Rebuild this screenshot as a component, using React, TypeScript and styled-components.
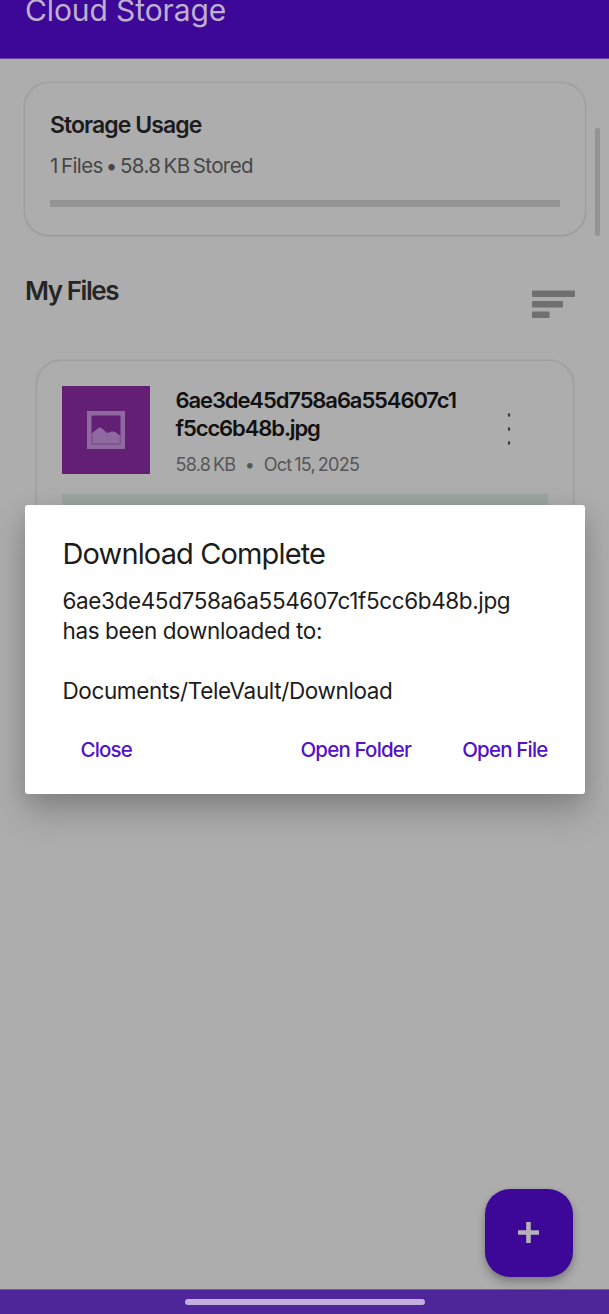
import React from "react";
import styled, { createGlobalStyle } from "styled-components";

const GlobalStyle = createGlobalStyle`
  * { box-sizing: border-box; }
  html, body { margin: 0; padding: 0; background: #adadad; }
  body { font-family: Inter, "Liberation Sans", sans-serif; overflow: hidden; }
  h1, h2, h3, p { margin: 0; }
  button { font: inherit; border: 0; background: none; padding: 0; }
`;

const Screen = styled.div`
  position: relative;
  width: 609px;
  height: 1314px;
  display: flex;
  flex-direction: column;
  overflow: hidden;
  background: #adadad;
`;

const TopBar = styled.header`
  height: 59px;
  flex: none;
  padding-left: 25px;
  background: #3d0897;
  border-bottom: 1px solid #6543a0;
`;

const AppTitle = styled.h1`
  margin-top: -10px;
  font-size: 30px;
  line-height: 40px;
  font-weight: 400;
  letter-spacing: -0.1px;
  color: #bfb0cd;
  white-space: nowrap;
`;

const Content = styled.main`
  flex: 1;
  display: flex;
  flex-direction: column;
  padding: 24px 24px 0 25px;
`;

const Card = styled.section`
  border-radius: 24px;
  background: #adadad;
  box-shadow: 0 0 2px 0.5px rgba(0, 0, 0, 0.1), 0 1px 2px rgba(0, 0, 0, 0.05);
`;

const UsageCard = styled(Card)`
  height: 152px;
  padding: 27px 25px 0;
`;

const UsageTitle = styled.h2`
  font-size: 23px;
  line-height: 30px;
  font-weight: 600;
  letter-spacing: -0.93px;
  color: #1c1c1c;
`;

const UsageText = styled.p`
  margin-top: 12px;
  font-size: 20.5px;
  line-height: 28px;
  letter-spacing: -0.6px;
  word-spacing: -2px;
  color: #474747;
`;

const UsageTrack = styled.div`
  margin-top: 20px;
  height: 7px;
  background: #949494;
`;

const SectionHead = styled.div`
  display: flex;
  justify-content: space-between;
  height: 126px;
  padding: 38px 10px 0 0;
`;

const SectionTitle = styled.h2`
  font-size: 26px;
  line-height: 36px;
  font-weight: 600;
  letter-spacing: -1.45px;
  color: #262626;
`;

const SortIcon = styled.svg`
  width: 43px;
  height: 28px;
  margin-top: 17px;
`;

const FileCard = styled(Card)`
  height: 250px;
  margin: 0 12px;
  padding: 25px 25px 0;
`;

const FileRow = styled.div`
  display: flex;
  height: 88px;
`;

const Thumb = styled.div`
  width: 88px;
  height: 88px;
  display: grid;
  place-items: center;
  background: #631f73;
`;

const FileInfo = styled.div`
  width: 300px;
  margin-left: 25.5px;
`;

const FileName = styled.h3`
  font-size: 22px;
  line-height: 28px;
  font-weight: 600;
  letter-spacing: -1.1px;
  color: #111;
  white-space: nowrap;
`;

const FileMeta = styled.p`
  display: flex;
  gap: 9.5px;
  margin-top: 10px;
  font-size: 18px;
  line-height: 26px;
  letter-spacing: -0.74px;
  word-spacing: -1.5px;
  color: #575757;
`;

const MoreIcon = styled.svg`
  width: 6px;
  height: 36px;
  margin: 25px 0 0 30px;
`;

const StatusBand = styled.div`
  height: 40px;
  margin-top: 20px;
  background: #9ba49f;
`;

const NavBar = styled.footer`
  height: 25px;
  flex: none;
  display: flex;
  justify-content: center;
  padding-top: 9px;
  background: #4f2699;
  border-top: 1px solid #7659a5;
`;

const HomePill = styled.div`
  width: 240px;
  height: 6px;
  border-radius: 3px;
  background: #c3aee0;
`;

const ScrollThumb = styled.div`
  position: absolute;
  top: 128px;
  right: 9px;
  width: 5px;
  height: 108px;
  border-radius: 2px;
  background: #949494;
`;

const AddButton = styled.button`
  position: absolute;
  right: 36.5px;
  bottom: 37px;
  width: 88px;
  height: 88px;
  display: grid;
  place-items: center;
  border-radius: 25px;
  background: #3d0897;
  box-shadow: 0 6px 10px rgba(0, 0, 0, 0.22), 0 1px 5px rgba(0, 0, 0, 0.12);
`;

const PlusIcon = styled.svg`
  width: 21px;
  height: 21px;
  margin-bottom: 1px;
`;

const Dialog = styled.div`
  position: absolute;
  top: 505px;
  left: 25px;
  width: 560px;
  height: 289px;
  padding: 29px 37.5px 0 37.5px;
  border-radius: 3px;
  background: #fff;
  box-shadow: 0 18px 36px rgba(0, 0, 0, 0.2), 0 6px 20px rgba(0, 0, 0, 0.1);
  color: #1c1c1c;
`;

const DialogTitle = styled.h2`
  font-size: 29px;
  line-height: 40px;
  font-weight: 400;
  letter-spacing: -0.87px;
`;

const DialogText = styled.p<{ $gap?: number }>`
  margin-top: ${(p) => p.$gap ?? 0}px;
  font-size: 22.5px;
  line-height: 30px;
  letter-spacing: -0.38px;
  white-space: nowrap;
`;

const Actions = styled.div`
  display: flex;
  margin-top: 29px;
  padding-left: 18px;
`;

const Action = styled.button<{ $start?: boolean }>`
  margin-right: ${(p) => (p.$start ? "auto" : "51px")};
  font-size: 20.5px;
  line-height: 30px;
  font-weight: 500;
  letter-spacing: -0.82px;
  color: #5412c6;
  white-space: nowrap;
  &:last-child { margin-right: 0; }
`;

export default function App() {
  return (
    <Screen>
      <GlobalStyle />
      <TopBar>
        <AppTitle>Cloud Storage</AppTitle>
      </TopBar>
      <Content>
        <UsageCard>
          <UsageTitle>Storage Usage</UsageTitle>
          <UsageText>1 Files • 58.8 KB Stored</UsageText>
          <UsageTrack />
        </UsageCard>
        <SectionHead>
          <SectionTitle>My Files</SectionTitle>
          <SortIcon viewBox="0 0 43 28" fill="#707070">
            <rect y="0.5" width="43" height="6.5" rx="1" />
            <rect y="11" width="31" height="6.5" rx="1" />
            <rect y="21.5" width="17.5" height="6.5" rx="1" />
          </SortIcon>
        </SectionHead>
        <FileCard>
          <FileRow>
            <Thumb>
              <svg width="38" height="38" viewBox="0 0 38 38">
                <rect x="2.25" y="2.25" width="33.5" height="33.5" fill="none" stroke="#9069a0" strokeWidth="4.5" />
                <path d="M4.5 22.5L12 16.5Q13.5 16 15 17.5L20 22L25 20.5Q27 20 29 21.5L33.5 25V33.5H4.5Z" fill="#9069a0" />
                <path d="M5 23V32.5H33V26" fill="none" stroke="#7c4c8b" strokeWidth="0.8" />
              </svg>
            </Thumb>
            <FileInfo>
              <FileName>
                6ae3de45d758a6a554607c1
                <br />
                f5cc6b48b.jpg
              </FileName>
              <FileMeta>
                <span>58.8 KB</span>
                <span>•</span>
                <span>Oct 15, 2025</span>
              </FileMeta>
            </FileInfo>
            <MoreIcon viewBox="0 0 6 36" fill="#3c3c3c">
              <ellipse cx="3" cy="4" rx="1.2" ry="2" />
              <ellipse cx="3" cy="18" rx="1.2" ry="2" />
              <ellipse cx="3" cy="32" rx="1.2" ry="2" />
            </MoreIcon>
          </FileRow>
          <StatusBand />
        </FileCard>
      </Content>
      <NavBar>
        <HomePill />
      </NavBar>
      <ScrollThumb />
      <AddButton aria-label="Add file">
        <PlusIcon viewBox="0 0 21 21" fill="none" stroke="#b5b0bb" strokeWidth="4.6">
          <path d="M10.5 0V21M0 10.5H21" />
        </PlusIcon>
      </AddButton>
      <Dialog role="dialog">
        <DialogTitle>Download Complete</DialogTitle>
        <DialogText $gap={12}>6ae3de45d758a6a554607c1f5cc6b48b.jpg</DialogText>
        <DialogText>has been downloaded to:</DialogText>
        <DialogText $gap={30}>Documents/TeleVault/Download</DialogText>
        <Actions>
          <Action $start>Close</Action>
          <Action>Open Folder</Action>
          <Action>Open File</Action>
        </Actions>
      </Dialog>
    </Screen>
  );
}
